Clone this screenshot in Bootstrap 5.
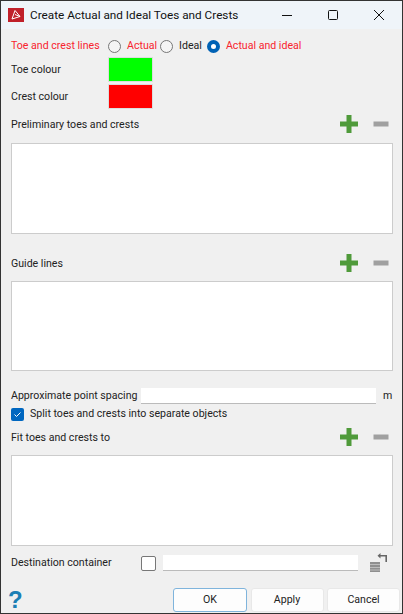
<!DOCTYPE html>
<html lang="en">
<head>
    <meta charset="UTF-8">
    <meta name="viewport" content="width=device-width, initial-scale=1.0">
    <title>Create Actual and Ideal Toes and Crests</title>
    <link href="https://cdn.jsdelivr.net/npm/bootstrap@5.3.0/dist/css/bootstrap.min.css" rel="stylesheet">
    <style>
        html, body { height: 100%; }
        body {
            background: #f0f0f0;
            color: #222;
            font-family: Roboto, "Open Sans", sans-serif;
            font-size: 10.6px;
            line-height: 16px;
            overflow: hidden;
        }
        .dlg-window {
            width: 403px;
            height: 614px;
            border: 1px solid #333;
        }
        .dlg-title {
            height: 28px;
            flex: none;
            background: #eff4f9;
            font-size: 11.75px;
            color: #111;
            padding-left: 7px;
        }
        .dlg-logo { width: 16px; height: 14px; background: #c0202a; margin-right: 6px; }
        .win-btn { width: 46px; height: 28px; }
        .dlg-body { padding: 0 9px 0 10px; }
        .row-radio { height: 27px; padding-top: 7px; }
        .txt-red { color: #f8232e; }
        .lbl-col { width: 97px; }
        .radio-off, .radio-on {
            width: 13px; height: 13px; border-radius: 50%;
            border: 1px solid #777; background: #f5f5f5; flex: none;
        }
        .radio-on { border: 4px solid #0062b5; background: #fff; }
        .radio-txt { margin-left: 6px; margin-right: 5px; }
        .radio-first { margin-right: 3px; }
        .swatch { width: 45px; height: 25px; border: 1px solid #ddd; }
        .swatch-green { background: #00ff00; }
        .swatch-red { background: #ff0000; }
        .row-swatch { height: 27px; }
        .row-head { height: 28px; margin-bottom: 5px; padding-right: 2px; }
        .head-tight { margin-bottom: 4px; }
        .head-lbl { padding-top: 2px; }
        .list-area {
            height: 91px;
            background: #fff; border: 1px solid #ccc;
        }
        .list-short { height: 90px; }
        .gap-a { height: 15px; flex: none; }
        .gap-b { height: 17px; flex: none; }
        .tool-btn { width: 20px; height: 20px; }
        .tool-btn + .tool-btn { margin-left: 12px; }
        .line-input {
            height: 16px; background: #fff;
            border: 0; border-bottom: 1px solid #bbb;
        }
        .row-spacing { height: 16px; }
        .row-spacing .line-input { width: 235px; }
        .lbl-wide { width: 130px; flex: none; white-space: nowrap; }
        .unit-m { margin-left: 7px; }
        .row-split { height: 16px; margin-top: 2px; margin-bottom: 1px; }
        .chk-on {
            width: 13px; height: 13px; border-radius: 2px;
            background: #0067c0; margin-right: 6px;
        }
        .chk-off {
            width: 15px; height: 15px; border-radius: 2px;
            background: #fff; border: 1px solid #777;
        }
        .row-dest { height: 16px; margin-top: 9px; }
        .row-dest .line-input { width: 195px; margin-left: 7px; }
        .stack-icon { margin-left: 10px; flex: none; }
        .dlg-foot { margin-top: 17px; height: 24px; margin-right: -7px; }
        .help-mark {
            width: 20px; color: #1c7fb5; font-family: "Liberation Sans", sans-serif;
            font-weight: 700; font-size: 24px; line-height: 24px; margin-left: -3px;
        }
        .act-row { gap: 3.5px; }
        .act-btn {
            width: 73px; height: 24px; padding: 0;
            background: #fdfdfd; color: #222;
            border: 1px solid #e8e8e8; border-radius: 3px;
            font-size: 10.6px; line-height: 20px;
        }
        .act-btn:hover { background: #fdfdfd; color: #222; }
        .act-default { width: 74px; border-color: #7fb4dc; }
    </style>
</head>

<body>
    <div class="dlg-window d-flex flex-column">
        <div class="dlg-title d-flex align-items-center">
            <div class="dlg-logo d-flex align-items-center justify-content-center">
                <svg width="12" height="12" viewBox="0 0 12 12" fill="none" stroke="#fff" stroke-width="1"><path d="M5 1.500 L10 7.500 L2 10 Z M5 5.500 L10 7.500"/></svg>
            </div>
            <span class="flex-grow-1">Create Actual and Ideal Toes and Crests</span>
            <div class="win-btn d-flex align-items-center justify-content-center">
                <svg width="10" height="10" viewBox="0 0 10 10"><path d="M0 5.500H10" stroke="#111"/></svg>
            </div>
            <div class="win-btn d-flex align-items-center justify-content-center">
                <svg width="10" height="10" viewBox="0 0 10 10" fill="none"><rect x=".5" y=".5" width="9" height="9" rx="1" stroke="#111"/></svg>
            </div>
            <div class="win-btn d-flex align-items-center justify-content-center">
                <svg width="10" height="10" viewBox="0 0 10 10"><path d="M0 0L10 10M10 0L0 10" stroke="#111"/></svg>
            </div>
        </div>

        <div class="dlg-body d-flex flex-column">
            <div class="row-radio d-flex align-items-center">
                <span class="lbl-col txt-red">Toe and crest lines</span>
                <span class="radio-off"></span><span class="radio-txt radio-first txt-red">Actual</span>
                <span class="radio-off"></span><span class="radio-txt">Ideal</span>
                <span class="radio-on"></span><span class="radio-txt txt-red">Actual and ideal</span>
            </div>
            <div class="row-swatch d-flex align-items-center">
                <span class="lbl-col">Toe colour</span><span class="swatch swatch-green"></span>
            </div>
            <div class="row-swatch d-flex align-items-center">
                <span class="lbl-col">Crest colour</span><span class="swatch swatch-red"></span>
            </div>

            <div class="row-head d-flex align-items-center">
                <span class="head-lbl flex-grow-1">Preliminary toes and crests</span>
                <span class="tool-btn"><svg class="d-block" width="20" height="20" viewBox="0 0 20 20"><path d="M10 1V19M1 10H19" stroke="#4f9a3a" stroke-width="5"/></svg></span>
                <span class="tool-btn"><svg class="d-block" width="20" height="20" viewBox="0 0 20 20"><path d="M2.500 10H17.500" stroke="#a0a0a0" stroke-width="5"/></svg></span>
            </div>
            <div class="list-area"></div>
            <div class="gap-a"></div>

            <div class="row-head head-tight d-flex align-items-center">
                <span class="head-lbl flex-grow-1">Guide lines</span>
                <span class="tool-btn"><svg class="d-block" width="20" height="20" viewBox="0 0 20 20"><path d="M10 1V19M1 10H19" stroke="#4f9a3a" stroke-width="5"/></svg></span>
                <span class="tool-btn"><svg class="d-block" width="20" height="20" viewBox="0 0 20 20"><path d="M2.500 10H17.500" stroke="#a0a0a0" stroke-width="5"/></svg></span>
            </div>
            <div class="list-area list-short"></div>
            <div class="gap-b"></div>

            <div class="row-spacing d-flex align-items-center">
                <span class="lbl-wide">Approximate point spacing</span>
                <span class="line-input"></span>
                <span class="unit-m">m</span>
            </div>
            <div class="row-split d-flex align-items-center">
                <span class="chk-on d-flex align-items-center justify-content-center">
                    <svg width="9" height="9" viewBox="0 0 9 9" fill="none"><path d="M1.500 4.500L3.500 6.500L7.500 2.500" stroke="#fff"/></svg>
                </span>
                <span>Split toes and crests into separate objects</span>
            </div>
            <div class="row-head head-tight d-flex align-items-center">
                <span class="head-lbl flex-grow-1">Fit toes and crests to</span>
                <span class="tool-btn"><svg class="d-block" width="20" height="20" viewBox="0 0 20 20"><path d="M10 1V19M1 10H19" stroke="#4f9a3a" stroke-width="5"/></svg></span>
                <span class="tool-btn"><svg class="d-block" width="20" height="20" viewBox="0 0 20 20"><path d="M2.500 10H17.500" stroke="#a0a0a0" stroke-width="5"/></svg></span>
            </div>
            <div class="list-area"></div>

            <div class="row-dest d-flex align-items-center">
                <span class="lbl-wide">Destination container</span>
                <span class="chk-off"></span>
                <span class="line-input"></span>
                <svg class="stack-icon" width="20" height="20" viewBox="0 0 20 20" fill="none"><path d="M2 9H12V19H2Z" fill="#8f8f8f"/><path d="M2 11.500H12M2 14.500H12M2 17H12" stroke="#c8c8c8" stroke-width=".8"/><path d="M18.200 9V2.800H11" stroke="#666" stroke-width="1.600"/><path d="M12.500 0V5.500L9.500 2.800Z" fill="#666"/></svg>
            </div>

            <div class="dlg-foot d-flex align-items-center">
                <span class="help-mark">?</span>
                <div class="ms-auto d-flex act-row">
                    <button class="btn act-btn act-default">OK</button>
                    <button class="btn act-btn">Apply</button>
                    <button class="btn act-btn">Cancel</button>
                </div>
            </div>
        </div>
    </div>
    <script src="https://cdn.jsdelivr.net/npm/bootstrap@5.3.0/dist/js/bootstrap.bundle.min.js"></script>
</body>
</html>
